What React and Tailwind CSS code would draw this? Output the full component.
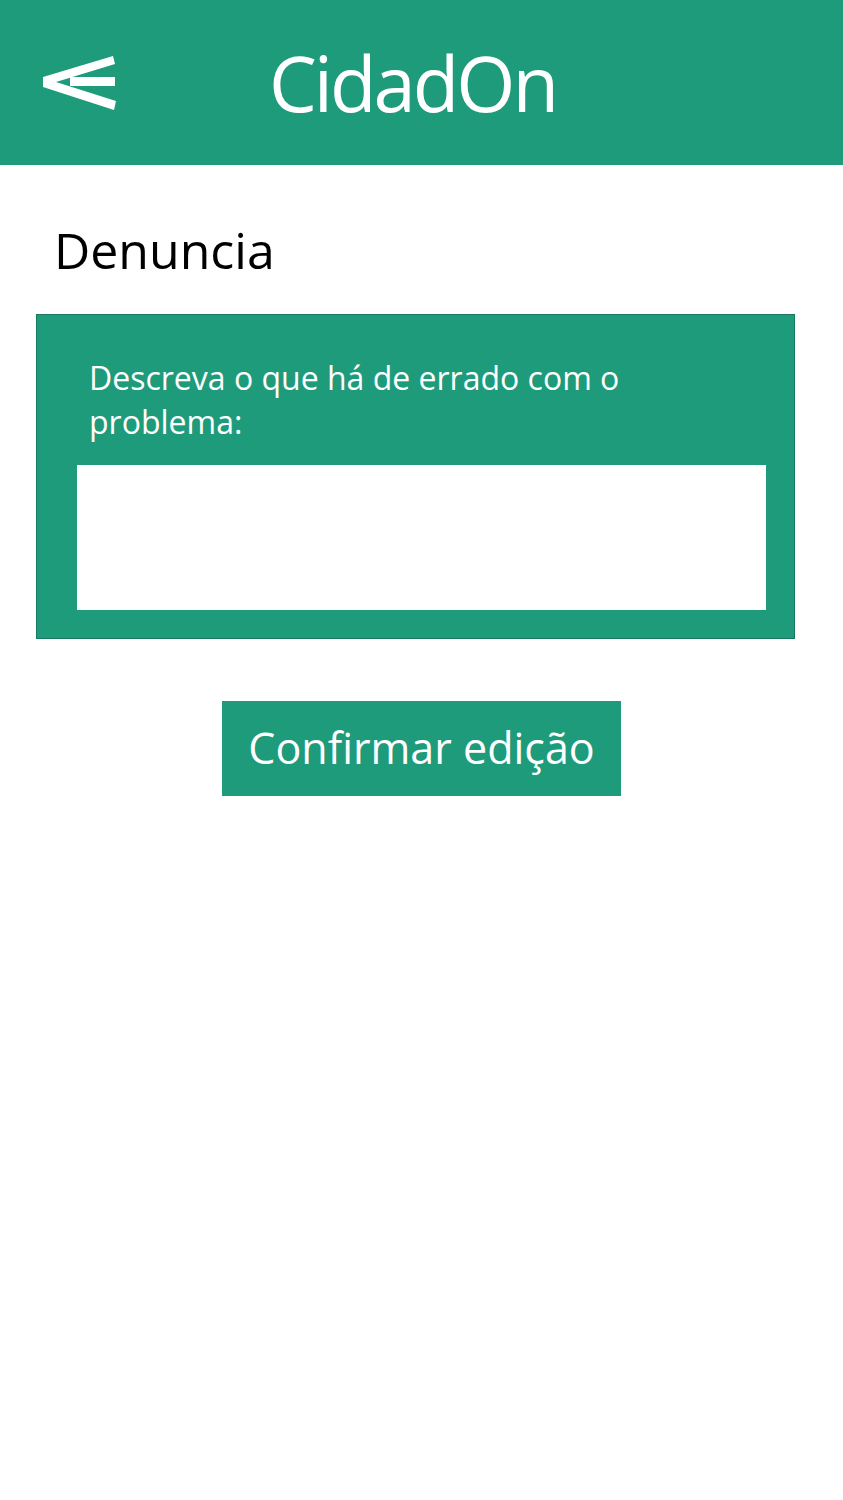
export default function App() {
  return (
    <div className="min-h-[1500px] bg-white" style={{ fontFamily: '"Open Sans", "Noto Sans", sans-serif' }}>
      <header className="flex h-[165px] items-center bg-[#1e9b7a] text-white">
        <button type="button" className="ml-[42px] flex h-[56px] w-[76px] shrink-0 items-center justify-center">
          <svg width="76" height="56" viewBox="0 0 76 56" fill="white" className="shrink-0">
            <polygon points="1,22 71,1 73,9 14,27 74,46 72,55 1,32" />
            <rect x="28" y="22" width="45" height="9" />
          </svg>
        </button>
        <h1 className="ml-[151px] text-[76px] leading-none tracking-[-3px]">CidadOn</h1>
      </header>

      <main className="px-[36px]">
        <h2 className="mt-[60px] ml-[18px] text-[50px] leading-none text-black">Denuncia</h2>

        <section className="mt-[39px] w-[759px] border border-[#177a5f] bg-[#1e9b7a] px-[40px] pt-[41px] pb-[28px]">
          <label className="block px-[12px] text-[32px] leading-[44px] text-white">
            Descreva o que há de errado com o problema:
          </label>
          <div className="mt-[21px] h-[145px] w-[689px] bg-white" />
        </section>

        <div className="mt-[62px] flex justify-center">
          <button type="button" className="-ml-[36px] -mr-[36px] flex h-[95px] w-[399px] items-center justify-center bg-[#1e9b7a] text-[43px] text-white">
            Confirmar edição
          </button>
        </div>
      </main>
    </div>
  );
}
